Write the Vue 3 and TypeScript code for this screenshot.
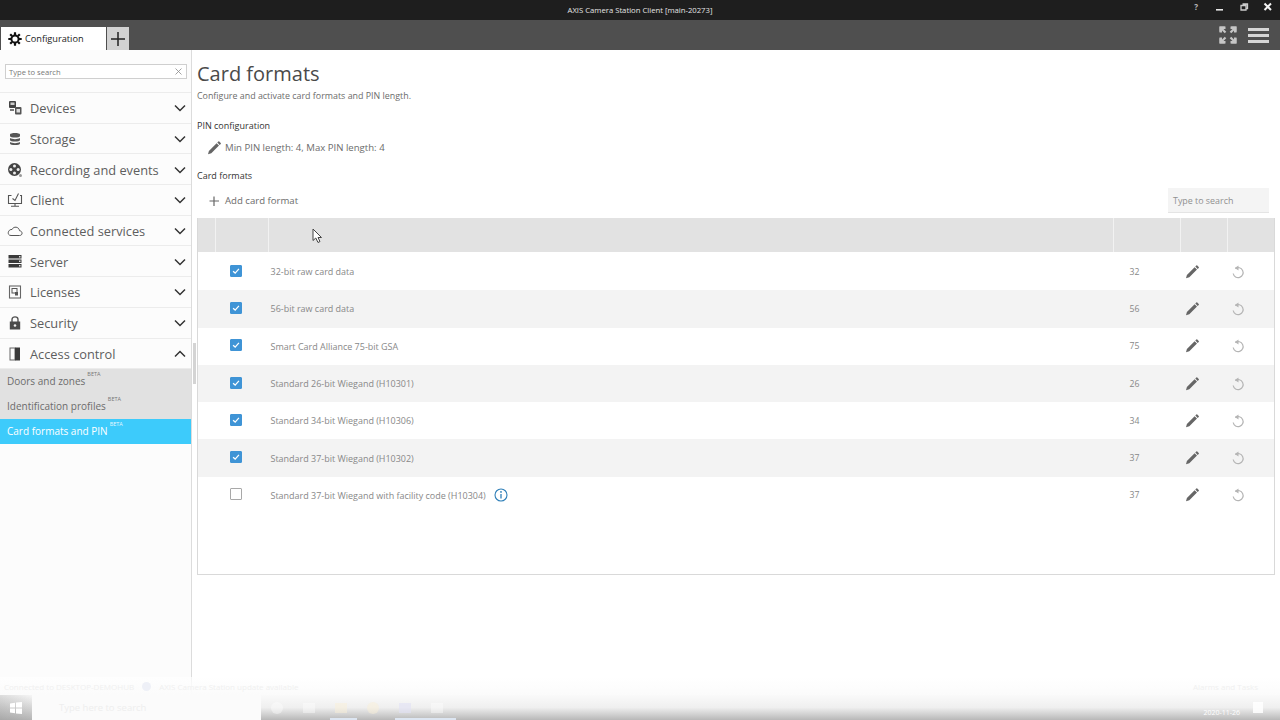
<script setup lang="ts">
const nav = [
  { label: 'Devices', icon: 'devices', open: false },
  { label: 'Storage', icon: 'storage', open: false },
  { label: 'Recording and events', icon: 'film', open: false },
  { label: 'Client', icon: 'client', open: false },
  { label: 'Connected services', icon: 'cloud', open: false },
  { label: 'Server', icon: 'server', open: false },
  { label: 'Licenses', icon: 'license', open: false },
  { label: 'Security', icon: 'lock', open: false },
  { label: 'Access control', icon: 'door', open: true },
]
const subs = [
  { label: 'Doors and zones', active: false },
  { label: 'Identification profiles', active: false },
  { label: 'Card formats and PIN', active: true },
]
const rows = [
  { name: '32-bit raw card data', bits: 32, on: true, info: false },
  { name: '56-bit raw card data', bits: 56, on: true, info: false },
  { name: 'Smart Card Alliance 75-bit GSA', bits: 75, on: true, info: false },
  { name: 'Standard 26-bit Wiegand (H10301)', bits: 26, on: true, info: false },
  { name: 'Standard 34-bit Wiegand (H10306)', bits: 34, on: true, info: false },
  { name: 'Standard 37-bit Wiegand (H10302)', bits: 37, on: true, info: false },
  { name: 'Standard 37-bit Wiegand with facility code (H10304)', bits: 37, on: false, info: true },
]
const pencil = 'M1 13.2 1.9 9.9 9.6 2.2 12 4.6 4.3 12.3ZM10.3 1.5 11.3.5Q11.8 0 12.3.5L13.7 1.9Q14.2 2.4 13.7 2.9L12.7 3.9Z'
</script>

<template>
  <div class="app">
    <header class="titlebar">
      <span class="title">AXIS Camera Station Client [main-20273]</span>
      <div class="winbtns">
        <span class="help">?</span>
        <svg width="10" height="10" viewBox="0 0 10 10"><rect x="1" y="7" width="7" height="1.6" fill="#e6e6e6" /></svg>
        <svg width="10" height="10" viewBox="0 0 10 10"><path d="M3.500 2H8.500V6.500H7M2 3.500H7V8H2Z" fill="none" stroke="#ccc" stroke-width="1.300" /></svg>
        <svg width="10" height="10" viewBox="0 0 10 10"><path d="M1.500 1.500 8 8M8 1.500 1.500 8" stroke="#f2f2f2" stroke-width="2" /></svg>
      </div>
    </header>

    <div class="tabbar">
      <div class="tab">
        <svg class="gear" width="14" height="14" viewBox="0 0 14 14">
          <circle cx="7" cy="7" r="3.600" fill="none" stroke="#111" stroke-width="2" />
          <path d="M7 .3V3M7 11V13.700M.3 7H3M11 7H13.700M2.200 2.200 4 4M10 10 11.800 11.800M11.800 2.200 10 4M4 10 2.200 11.800" stroke="#111" stroke-width="2.200" />
        </svg>
        <span>Configuration</span>
      </div>
      <div class="plus">
        <svg width="16" height="16" viewBox="0 0 16 16"><path d="M8 1V15M1 8H15" stroke="#222" stroke-width="1.500" /></svg>
      </div>
      <div class="tabtools">
        <svg width="18" height="18" viewBox="0 0 18 18" fill="#c6c6c6" stroke="#c6c6c6">
          <path d="M.5.5H6L.5 6ZM17.500.5V6L12 .5ZM.5 17.500V12L6 17.500ZM17.500 17.500H12L17.500 12Z" stroke="none" />
          <path d="M2.500 2.500 6.500 6.500M15.500 2.500 11.500 6.500M2.500 15.500 6.500 11.500M15.500 15.500 11.500 11.500" stroke-width="2.200" fill="none" />
          <path d="M.5 .5H6.500V3H3V6.500H.5Z M17.500 .5H11.500V3H15V6.500H17.500Z M.5 17.500H6.500V15H3V11.500H.5Z M17.500 17.500H11.500V15H15V11.500H17.500Z" stroke="none" />
        </svg>
        <div class="burger"><i></i><i></i><i></i></div>
      </div>
    </div>

    <div class="body">
      <aside class="sidebar">
        <div class="side-search">
          <div class="side-input">
            <span>Type to search</span>
            <svg width="7" height="7" viewBox="0 0 7 7"><path d="M.5.5 6.500 6.500M6.500.5.5 6.500" stroke="#8a8a8a" stroke-width=".8" /></svg>
          </div>
        </div>
        <nav class="nav">
          <div v-for="n in nav" :key="n.label" class="nav-item">
            <svg class="nav-icon" width="16" height="16" viewBox="0 0 16 16">
              <template v-if="n.icon === 'devices'">
                <rect x="2" y="1" width="7" height="7" rx="1" fill="#444" />
                <rect x="3.500" y="2.500" width="4" height="2.500" fill="#ccc" />
                <rect x="8" y="7" width="6.500" height="7.500" rx="1" fill="#555" />
                <rect x="9.500" y="9" width="3.500" height="3.500" fill="#ddd" />
                <rect x="3" y="9" width="4" height="2" fill="#777" />
              </template>
              <template v-else-if="n.icon === 'storage'">
                <path d="M3 3.500C3 1.500 13 1.500 13 3.500V5C13 7 3 7 3 5ZM3 7C5 8.500 11 8.500 13 7V9C13 11 3 11 3 9ZM3 11C5 12.500 11 12.500 13 11V12.500C13 14.500 3 14.500 3 12.500Z" fill="#555" />
              </template>
              <template v-else-if="n.icon === 'film'">
                <circle cx="7.500" cy="7.500" r="6.500" fill="#444" />
                <circle cx="7.500" cy="3.900" r="1.500" fill="#eee" />
                <circle cx="7.500" cy="11.100" r="1.500" fill="#eee" />
                <circle cx="3.900" cy="7.500" r="1.500" fill="#eee" />
                <circle cx="11.100" cy="7.500" r="1.500" fill="#eee" />
                <circle cx="13.500" cy="13.500" r="1.500" fill="#999" />
              </template>
              <template v-else-if="n.icon === 'client'">
                <path d="M4.500 3.500H1.500V11.500H14.500V3.500H13" fill="none" stroke="#555" stroke-width="1.100" />
                <path d="M5.500 6.500 8 8.500 11.500 1.500" fill="none" stroke="#555" stroke-width="1.100" />
                <path d="M8 11.500V14M4 14.300H12" stroke="#555" stroke-width="1.100" />
              </template>
              <template v-else-if="n.icon === 'cloud'">
                <path d="M4 12.500H12.500C16 12.500 15.800 8 12.500 7.700 12 3.500 6.500 3 5 6.500 1 6 -.5 12.500 4 12.500Z" fill="none" stroke="#555" stroke-width="1" />
              </template>
              <template v-else-if="n.icon === 'server'">
                <rect x="1.500" y="1" width="13" height="3.500" fill="#3a3a3a" />
                <rect x="1.500" y="5.500" width="13" height="3.500" fill="#3a3a3a" />
                <rect x="1.500" y="10" width="13" height="3.500" fill="#3a3a3a" />
                <rect x="12" y="2" width="1.500" height="1.500" fill="#ddd" />
                <rect x="12" y="6.500" width="1.500" height="1.500" fill="#ddd" />
                <rect x="12" y="11" width="1.500" height="1.500" fill="#ddd" />
              </template>
              <template v-else-if="n.icon === 'license'">
                <rect x="2.500" y="2" width="11" height="12" fill="none" stroke="#666" stroke-width="1.100" />
                <rect x="5" y="4.500" width="5" height="4.500" fill="none" stroke="#555" stroke-width="1" />
                <rect x="8" y="8" width="3" height="3.500" fill="#555" />
              </template>
              <template v-else-if="n.icon === 'lock'">
                <path d="M5 7V4.500C5 1 11 1 11 4.500V7" fill="none" stroke="#555" stroke-width="1.400" />
                <rect x="2.800" y="6.500" width="10.400" height="8" fill="#4a4a4a" />
                <circle cx="8" cy="10.500" r="1.300" fill="#eee" />
              </template>
              <template v-else>
                <rect x="3" y="2" width="5" height="12" fill="none" stroke="#666" stroke-width="1" />
                <rect x="8" y="1.500" width="5" height="13" fill="#3a3a3a" />
              </template>
            </svg>
            <span class="nav-label">{{ n.label }}</span>
            <svg class="chev" width="12" height="8" viewBox="0 0 12 8">
              <path :d="n.open ? 'M1 6.500 6 1.500 11 6.500' : 'M1 1.500 6 6.500 11 1.500'" fill="none" stroke="#333" stroke-width="1.500" />
            </svg>
          </div>
        </nav>
        <div class="subnav">
          <div v-for="s in subs" :key="s.label" class="sub-item" :class="{ active: s.active }">
            <span class="sub-label">{{ s.label }}<sup class="beta">BETA</sup></span>
          </div>
        </div>
      </aside>

      <main class="content">
        <h1 class="h1">Card formats</h1>
        <p class="desc">Configure and activate card formats and PIN length.</p>

        <h2 class="section first">PIN configuration</h2>
        <div class="action pin">
          <svg width="14" height="14" viewBox="0 0 14 14"><path :d="pencil" fill="#666" /></svg>
          <span>Min PIN length: 4, Max PIN length: 4</span>
        </div>

        <h2 class="section second">Card formats</h2>
        <div class="toolbar">
          <div class="action">
            <svg width="14" height="14" viewBox="0 0 14 14"><path d="M7 2.500V12M2.500 7H12" stroke="#666" stroke-width="1.200" /></svg>
            <span>Add card format</span>
          </div>
          <div class="grid-search">Type to search</div>
        </div>

        <div class="grid">
          <div class="grid-head">
            <div class="c0"></div>
            <div class="c1"></div>
            <div class="c2"></div>
            <div class="c3"></div>
            <div class="c4"></div>
            <div class="c5"></div>
          </div>
          <div v-for="(r, i) in rows" :key="r.name + r.bits" class="row" :class="{ alt: i % 2 === 1 }">
            <div class="c0"></div>
            <div class="c1 cell-check">
              <span class="check" :class="{ on: r.on }">
                <svg v-if="r.on" width="12" height="12" viewBox="0 0 12 12"><path d="M2.500 6.200 5 8.500 9.500 3.500" fill="none" stroke="#fff" stroke-width="1.500" /></svg>
              </span>
            </div>
            <div class="c2 cell-name">
              <span>{{ r.name }}</span>
              <svg v-if="r.info" class="info" width="14" height="14" viewBox="0 0 14 14">
                <circle cx="7" cy="7" r="6" fill="none" stroke="#2f7fb8" stroke-width="1.100" />
                <path d="M7 6V10.500" stroke="#2f7fb8" stroke-width="1.300" />
                <circle cx="7" cy="3.900" r=".9" fill="#2f7fb8" />
              </svg>
            </div>
            <div class="c3 cell-num">{{ r.bits }}</div>
            <div class="c4 cell-icon">
              <svg width="14" height="14" viewBox="0 0 14 14"><path :d="pencil" fill="#666" /></svg>
            </div>
            <div class="c5 cell-icon reset">
              <svg width="14" height="14" viewBox="0 0 14 14">
                <path d="M4.300 3.500A5 5 0 1 1 2.200 8.500" fill="none" stroke="#b5b5b5" stroke-width="1.200" />
                <path d="M7.500 .5V5.500L3.800 3Z" fill="#b5b5b5" />
              </svg>
            </div>
          </div>
        </div>
      </main>
    </div>

    <div class="grip"></div>

    <svg class="cursor" width="12" height="16" viewBox="0 0 12 16">
      <path d="M1 1V12.500L3.800 10 6 14.500 8 13.500 6 9.500H9.500Z" fill="#fff" stroke="#444" stroke-width="1" />
    </svg>

    <div class="fade">
      <div class="notice">
        <span class="ghost-l">Connected to DESKTOP-DEMOHUB</span>
        <i class="dot"></i>
        <span class="ghost-l">AXIS Camera Station update available</span>
        <span class="ghost-r">Alarms and Tasks</span>
      </div>
      <div class="taskbar">
        <div class="start">
          <svg width="12" height="12" viewBox="0 0 12 12" fill="#fff"><path d="M0 1.500 5 .8V5.500H0ZM6 .6 12 0V5.500H6ZM0 6.500H5V11.200L0 10.500ZM6 6.500H12V12L6 11.400Z" /></svg>
        </div>
        <div class="ts-box">Type here to search</div>
        <div class="apps">
          <i class="ga round"></i>
          <i class="ga"></i>
          <i class="ga warm"></i>
          <i class="ga warm round"></i>
          <i class="ga blue"></i>
          <i class="ga"></i>
        </div>
        <i class="hl hl-a"></i>
        <i class="hl hl-b"></i>
        <div class="tray">2020-11-26</div>
        <div class="note"></div>
      </div>
    </div>
  </div>
</template>

<style>
html, body { margin: 0; padding: 0; background: #fff; }
</style>

<style scoped>
.app {
  position: relative;
  width: 1280px;
  height: 720px;
  overflow: hidden;
  display: flex;
  flex-direction: column;
  font-family: "Open Sans", "Noto Sans", sans-serif;
  color: #555;
  background: #fff;
}
.titlebar {
  position: relative;
  flex: 0 0 20px;
  background: #1e1e1e;
  display: flex;
  align-items: center;
  justify-content: center;
}
.title { font-size: 7.700px; color: #e4e4e4; }
.winbtns {
  position: absolute;
  right: 7px;
  top: 1px;
  display: flex;
  align-items: center;
  gap: 14px;
  height: 11px;
}
.help { font-size: 8px; font-weight: 700; color: #bbb; margin-right: 3px; }
.tabbar {
  flex: 0 0 30px;
  background: #4f4f4f;
  display: flex;
  align-items: flex-end;
  box-sizing: border-box;
}
.tab {
  margin-left: 1px;
  width: 105px;
  height: 23px;
  background: #fff;
  display: flex;
  align-items: center;
  gap: 3px;
  padding-left: 7px;
  box-sizing: border-box;
  font-size: 9.200px;
  color: #222;
}
.plus {
  width: 22px;
  height: 23px;
  margin-left: 1px;
  background: #d2d2d2;
  display: flex;
  align-items: center;
  justify-content: center;
}
.tabtools {
  margin-left: auto;
  align-self: center;
  display: flex;
  align-items: center;
  gap: 11px;
  padding-right: 11px;
}
.burger { display: flex; flex-direction: column; gap: 3px; }
.burger i { display: block; width: 21px; height: 3px; background: #d6d6d6; }
.body { flex: 1; display: flex; min-height: 0; }
.sidebar {
  flex: 0 0 191px;
  border-right: 1px solid #dcdcdc;
  background: #fcfcfc;
}
.side-search {
  box-sizing: border-box;
  height: 43px;
  padding: 14px 4px 0 5px;
  border-bottom: 1px solid #ececec;
}
.side-input {
  height: 13px;
  border: 1px solid #cfcfcf;
  background: #fff;
  display: flex;
  align-items: center;
  justify-content: space-between;
  padding: 0 4px 0 3px;
  font-size: 7.600px;
  color: #777;
}
.nav-item {
  box-sizing: border-box;
  height: 30.700px;
  display: flex;
  align-items: center;
  padding: 1px 5px 0 7px;
  border-bottom: 1px solid #ececec;
}
.nav-icon { flex: 0 0 16px; margin-right: 7px; }
.nav-label { font-size: 12.800px; color: #5e5e5e; flex: 1; }
.subnav { background: #e1e1e1; }
.sub-item {
  height: 25px;
  box-sizing: border-box;
  padding: 0 0 2px 7px;
  display: flex;
  align-items: center;
  font-size: 10px;
  color: #6c6c6c;
}
.sub-item.active { background: #3dcbfb; color: #fff; }
.sub-label { position: relative; }
.beta {
  position: absolute;
  left: 100%;
  top: -3px;
  margin-left: 2px;
  font-size: 5.500px;
  line-height: 7px;
  color: #777;
}
.active .beta { color: #e6f8ff; }
.content { flex: 1; min-width: 0; padding: 0 5px 0 5px; }
.h1 { margin: 11px 0 0; font-size: 20px; line-height: 26px; font-weight: 400; color: #4a4a4a; }
.desc { margin: 2px 0 0; font-size: 8.900px; line-height: 13px; color: #6c6c6c; }
.section { margin: 0; font-size: 9px; line-height: 13px; font-weight: 400; color: #333; }
.section.first { margin-top: 17px; }
.section.second { margin-top: 14px; }
.action {
  display: flex;
  align-items: center;
  gap: 4px;
  padding-left: 10px;
  font-size: 9.600px;
  color: #6c6c6c;
}
.pin { margin-top: 8px; height: 15px; }
.toolbar {
  display: flex;
  align-items: center;
  justify-content: space-between;
  height: 25px;
  margin-top: 6px;
  padding-right: 6px;
}
.grid-search {
  box-sizing: border-box;
  width: 101px;
  height: 25px;
  padding: 0 5px;
  background: #f4f4f4;
  border-bottom: 1px solid #e4e4e4;
  font-size: 8.900px;
  line-height: 25px;
  color: #909090;
}
.grid {
  margin-top: 5px;
  height: 357px;
  box-sizing: border-box;
  border: 1px solid #d9d9d9;
  border-top: 0;
}
.grid-head {
  display: flex;
  height: 34px;
  background: #e2e2e2;
  margin-bottom: 1px;
}
.grid-head > div { border-right: 1px solid #f2f2f2; box-sizing: border-box; }
.grid-head > div:last-child { border-right: 0; }
.row { display: flex; height: 37.300px; align-items: stretch; background: #fff; }
.row.alt { background: #f3f3f3; }
.c0 { flex: 0 0 18px; }
.c1 { flex: 0 0 53px; }
.c2 { flex: 1; min-width: 0; }
.c3 { flex: 0 0 67px; }
.c4 { flex: 0 0 47px; }
.c5 { flex: 0 0 46px; }
.cell-check { display: flex; align-items: center; justify-content: center; padding-right: 14px; box-sizing: border-box; }
.check {
  box-sizing: border-box;
  width: 12px;
  height: 12px;
  margin-bottom: 2px;
  border: 1px solid #a8a8a8;
  border-radius: 1px;
  background: #fff;
  display: flex;
  align-items: center;
  justify-content: center;
}
.check.on { background: #3f94d6; border-color: #3f94d6; }
.cell-name { display: flex; align-items: center; gap: 8px; padding-left: 1.500px; font-size: 8.980px; color: #888; }
.cell-num { display: flex; align-items: center; justify-content: center; padding-right: 26px; box-sizing: border-box; font-size: 8.700px; color: #888; }
.cell-icon { display: flex; align-items: center; justify-content: center; padding-right: 25px; box-sizing: border-box; }
.cell-icon.reset { padding-right: 26px; }
.grip { position: absolute; left: 193px; top: 343px; width: 3px; height: 41px; background: #d4d4d4; }
.cursor { position: absolute; left: 312px; top: 228px; }
.fade {
  position: absolute;
  left: 0;
  right: 0;
  bottom: 0;
  height: 43px;
  pointer-events: none;
}
.notice {
  height: 18px;
  background: linear-gradient(rgba(255,255,255,.7), #fbfbfb);
  display: flex;
  align-items: center;
  gap: 8px;
  padding-left: 4px;
  font-size: 8px;
  color: #f0f0f0;
}
.dot { width: 9px; height: 9px; border-radius: 50%; background: #eef0f7; }
.ghost-r { margin-left: auto; margin-right: 22px; }
.taskbar {
  position: relative;
  height: 25px;
  background: linear-gradient(#fafafa, #efefef 50%, #b8b8b8);
  display: flex;
  align-items: center;
}
.start {
  align-self: stretch;
  width: 32px;
  display: flex;
  justify-content: center;
  align-items: center;
  background: linear-gradient(90deg, rgba(120,120,120,.2), rgba(120,120,120,0)), linear-gradient(#f6f6f6, #b4b4b4);
}
.ts-box {
  align-self: stretch;
  width: 229px;
  background: #fbfbfb;
  box-sizing: border-box;
  padding-left: 27px;
  font-size: 9.500px;
  line-height: 25px;
  color: #eeeeee;
}
.apps { display: flex; align-items: center; gap: 20px; margin-left: 10px; }
.ga { display: block; width: 12px; height: 10px; background: rgba(255,255,255,.4); }
.ga.round { border-radius: 50%; height: 12px; }
.ga.warm { background: rgba(250,240,215,.5); }
.ga.blue { background: rgba(225,225,245,.6); }
.hl { position: absolute; bottom: 0; height: 2px; background: #dde6f2; }
.hl-a { left: 330px; width: 27px; }
.hl-b { left: 395px; width: 61px; }
.tray { margin-left: auto; font-size: 7px; margin-top: 10px; color: #fff; }
.note { width: 10px; height: 11px; margin: 0 17px 0 13px; background: rgba(255,255,255,.85); }
</style>
